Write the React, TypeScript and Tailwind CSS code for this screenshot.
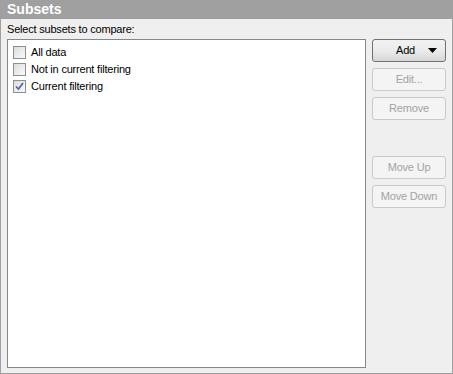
import React from 'react'

function Check({ checked }: { checked?: boolean }) {
  return (
    <span className="w-[13px] h-[13px] border border-[#8f8f8f] bg-gradient-to-br from-[#dcdcdc] to-[#fbfbfb] flex items-center justify-center shrink-0">
      {checked && (
        <svg width="9" height="9" viewBox="0 0 9 9">
          <path d="M1 4.5 L3.5 7 L8 1" stroke="#4a5fa8" strokeWidth="1.6" fill="none" />
        </svg>
      )}
    </span>
  )
}

function Btn({ label, disabled, arrow }: { label: string; disabled?: boolean; arrow?: boolean }) {
  return (
    <div
      className={
        'h-[23px] w-[74px] rounded-[3px] border flex items-center justify-center text-[11px] tracking-[-0.2px] ' +
        (disabled
          ? 'border-[#c9c9c9] bg-[#f4f4f4] text-[#a3a3a3]'
          : 'border-[#707070] bg-gradient-to-b from-[#f2f2f2] via-[#ebebeb] to-[#d6d6d6] text-black')
      }
    >
      {arrow ? (
        <div className="flex items-center w-full justify-end pr-[8px] gap-[13px]">
          <span>{label}</span>
          <svg width="9" height="5" viewBox="0 0 9 5">
            <path d="M0 0 H9 L4.5 5 Z" fill="#000" />
          </svg>
        </div>
      ) : (
        label
      )}
    </div>
  )
}

export default function App() {
  const items = [
    { label: 'All data', checked: false },
    { label: 'Not in current filtering', checked: false },
    { label: 'Current filtering', checked: true },
  ]
  return (
    <div className="w-[453px] h-[374px] flex flex-col bg-[#efefef] font-['Liberation_Sans',Arial,sans-serif]">
      <div className="h-[19px] bg-[#a0a0a0] text-white font-bold text-[14px] leading-[19px] pl-[7px]">Subsets</div>
      <div className="flex-1 border-x border-b border-[#a0a0a0] flex flex-col px-[6px] pb-[5px]">
        <div className="text-[11px] tracking-[-0.2px] leading-[20px] text-black">Select subsets to compare:</div>
        <div className="flex flex-1 gap-[6px]">
          <div className="w-[359px] border border-[#828790] bg-white pt-[4px] pl-[5px] flex flex-col">
            {items.map((it) => (
              <div key={it.label} className="h-[17px] flex items-center gap-[5px] text-[11px] tracking-[-0.2px] text-black">
                <Check checked={it.checked} />
                <span>{it.label}</span>
              </div>
            ))}
          </div>
          <div className="flex flex-col">
            <Btn label="Add" arrow />
            <div className="h-[6px]" />
            <Btn label="Edit..." disabled />
            <div className="h-[6px]" />
            <Btn label="Remove" disabled />
            <div className="h-[36px]" />
            <Btn label="Move Up" disabled />
            <div className="h-[6px]" />
            <Btn label="Move Down" disabled />
          </div>
        </div>
      </div>
    </div>
  )
}
